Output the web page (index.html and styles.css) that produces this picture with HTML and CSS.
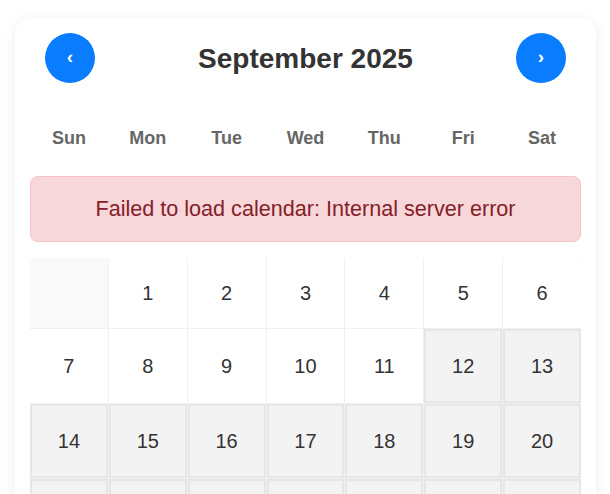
FILE: index.html
```html
<!DOCTYPE html>
<html lang="en">
<head>
<meta charset="utf-8">
<title>Calendar</title>
<link rel="stylesheet" href="styles.css">
</head>
<body>
<div class="page">
  <div class="card">
    <div class="header">
      <button class="nav">&lsaquo;</button>
      <h1 class="title">September 2025</h1>
      <button class="nav">&rsaquo;</button>
    </div>
    <div class="weekdays">
      <div>Sun</div><div>Mon</div><div>Tue</div><div>Wed</div><div>Thu</div><div>Fri</div><div>Sat</div>
    </div>
    <div class="error">Failed to load calendar: Internal server error</div>
    <div class="grid">
      <div class="day empty"></div>
      <div class="day">1</div>
      <div class="day">2</div>
      <div class="day">3</div>
      <div class="day">4</div>
      <div class="day">5</div>
      <div class="day">6</div>
      <div class="day">7</div>
      <div class="day">8</div>
      <div class="day">9</div>
      <div class="day">10</div>
      <div class="day">11</div>
      <div class="day off">12</div>
      <div class="day off">13</div>
      <div class="day off">14</div>
      <div class="day off">15</div>
      <div class="day off">16</div>
      <div class="day off">17</div>
      <div class="day off">18</div>
      <div class="day off">19</div>
      <div class="day off">20</div>
      <div class="day off">21</div>
      <div class="day off">22</div>
      <div class="day off">23</div>
      <div class="day off">24</div>
      <div class="day off">25</div>
      <div class="day off">26</div>
      <div class="day off">27</div>
    </div>
  </div>
</div>
</body>
</html>
```
FILE: styles.css
```css
* { box-sizing: border-box; }
html, body { margin: 0; padding: 0; background: #ffffff; }
body { font-family: "Liberation Sans", Arial, sans-serif; color: #333; }
.page { padding: 18px 14px 0 15px; }
.card {
  background: #fff;
  border-radius: 16px;
  box-shadow: 0 2px 14px rgba(0,0,0,0.07);
  padding: 15px 15px 20px 15px;
}
.header {
  display: flex;
  align-items: center;
  justify-content: space-between;
  padding: 0 15px;
  margin-bottom: 28px;
}
.nav {
  width: 50px;
  height: 50px;
  border-radius: 50%;
  border: none;
  background: #0a7cff;
  color: #fff;
  font-family: "Liberation Sans", Arial, sans-serif;
  font-weight: bold;
  font-size: 19px;
  display: flex;
  align-items: center;
  justify-content: center;
  padding: 0 0 2px 0;
}
.title {
  margin: 0;
  font-size: 28px;
  font-weight: bold;
  color: #333;
  padding-top: 2px;
}
.weekdays {
  display: grid;
  grid-template-columns: repeat(7, 1fr);
  gap: 1px;
}
.weekdays div {
  text-align: center;
  font-weight: bold;
  font-size: 18px;
  color: #666;
  padding: 17px 0 13px;
}
.error {
  margin: 14px 0 16px;
  background: #f8d7da;
  border: 1px solid #f5c2c7;
  color: #842029;
  border-radius: 8px;
  padding: 19px 10px;
  text-align: center;
  font-size: 21.6px;
}
.grid {
  display: grid;
  grid-template-columns: repeat(7, 1fr);
  gap: 1px;
  background: #eef0f2;
  border-radius: 8px 8px 0 0;
  overflow: hidden;
}
.day {
  background: #fff;
  min-height: 70px;
  display: flex;
  align-items: center;
  justify-content: center;
  font-size: 20px;
  color: #333;
}
.day.empty { background: #f9f9f9; }
.day.off {
  background: #f3f3f3;
  border: 2px solid #e6e6e6;
  min-height: 74px;
}
```
